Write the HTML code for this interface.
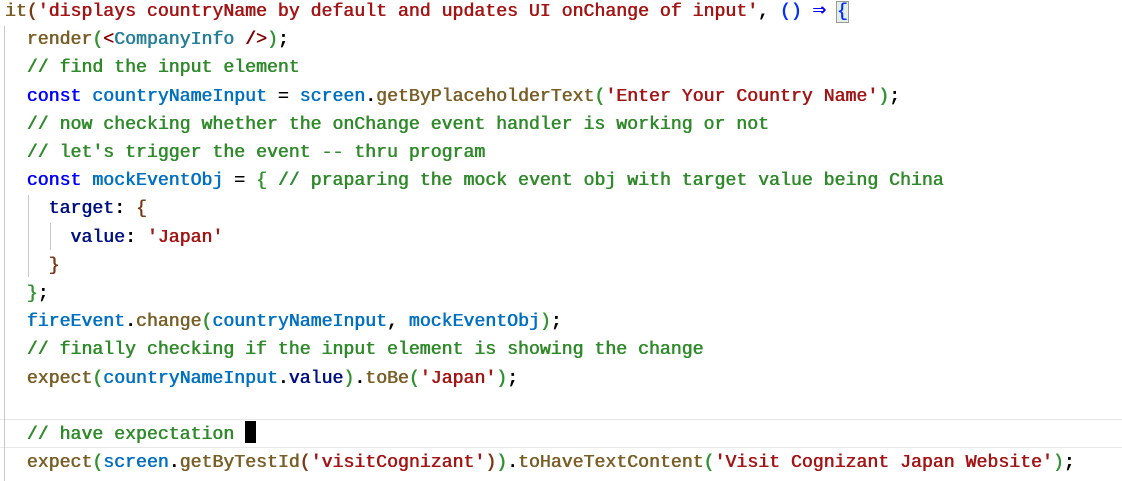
<!DOCTYPE html>
<html><head><meta charset="utf-8"><style>
html,body{margin:0;padding:0;background:#fff;width:1122px;height:481px;overflow:hidden;position:relative}
pre{margin:0;position:absolute;left:5px;top:-2px;font-family:"Liberation Mono","DejaVu Sans Mono",monospace;font-size:18.2px;line-height:28.2px;color:#000;font-weight:normal;text-shadow:0.4px 0 0 currentColor,-0.2px 0 0 currentColor}
.s{color:#a31515}.f{color:#795e26}.c{color:#2f8a2a}.k{color:#0000ff}.v{color:#001080}.b{color:#0070c1}.t{color:#267f99}.g{color:#319331}.y{color:#0431fa}.o{color:#7b3814}.r{color:#800000}
.guide{position:absolute;width:1px;background:#c8c8c8}
.hl{position:absolute;left:0;right:0;top:419px;height:27px;border-top:1px solid #e8e8e8;border-bottom:1px solid #e8e8e8}
.cur{display:inline-block;width:11px;height:22px;background:#000;vertical-align:-4px}
.box{outline:1px solid #9a9a9a;background:#e6efe6}
.ar{font-size:22px;line-height:0}
</style></head><body>
<div class="hl"></div>
<div class="guide" style="left:4px;top:26px;height:455px"></div>
<div class="guide" style="left:28px;top:195px;height:82px"></div>
<div class="guide" style="left:50px;top:223px;height:27px"></div>
<pre><span class="f">it</span><span class="o">(</span><span class="s">'displays countryName by default and updates UI onChange of input'</span>, <span class="y">()</span> <span class="k ar">⇒</span> <span class="y box">{</span>
  <span class="f">render</span><span class="g">(</span><span class="r">&lt;</span><span class="t">CompanyInfo</span> <span class="r">/&gt;</span><span class="g">)</span>;
  <span class="c">// find the input element</span>
  <span class="k">const</span> <span class="b">countryNameInput</span> = <span class="b">screen</span>.<span class="f">getByPlaceholderText</span><span class="g">(</span><span class="s">'Enter Your Country Name'</span><span class="g">)</span>;
  <span class="c">// now checking whether the onChange event handler is working or not</span>
  <span class="c">// let's trigger the event -- thru program</span>
  <span class="k">const</span> <span class="b">mockEventObj</span> = <span class="g">{</span> <span class="c">// praparing the mock event obj with target value being China</span>
    <span class="v">target</span>: <span class="o">{</span>
      <span class="v">value</span>: <span class="s">'Japan'</span>
    <span class="o">}</span>
  <span class="g">}</span>;
  <span class="b">fireEvent</span>.<span class="f">change</span><span class="g">(</span><span class="b">countryNameInput</span>, <span class="b">mockEventObj</span><span class="g">)</span>;
  <span class="c">// finally checking if the input element is showing the change</span>
  <span class="f">expect</span><span class="g">(</span><span class="b">countryNameInput</span>.<span class="v">value</span><span class="g">)</span>.<span class="f">toBe</span><span class="g">(</span><span class="s">'Japan'</span><span class="g">)</span>;

  <span class="c">// have expectation</span> <span class="cur"></span>
  <span class="f">expect</span><span class="g">(</span><span class="b">screen</span>.<span class="f">getByTestId</span><span class="o">(</span><span class="s">'visitCognizant'</span><span class="o">)</span><span class="g">)</span>.<span class="f">toHaveTextContent</span><span class="g">(</span><span class="s">'Visit Cognizant Japan Website'</span><span class="g">)</span>;
</pre>
</body></html>
